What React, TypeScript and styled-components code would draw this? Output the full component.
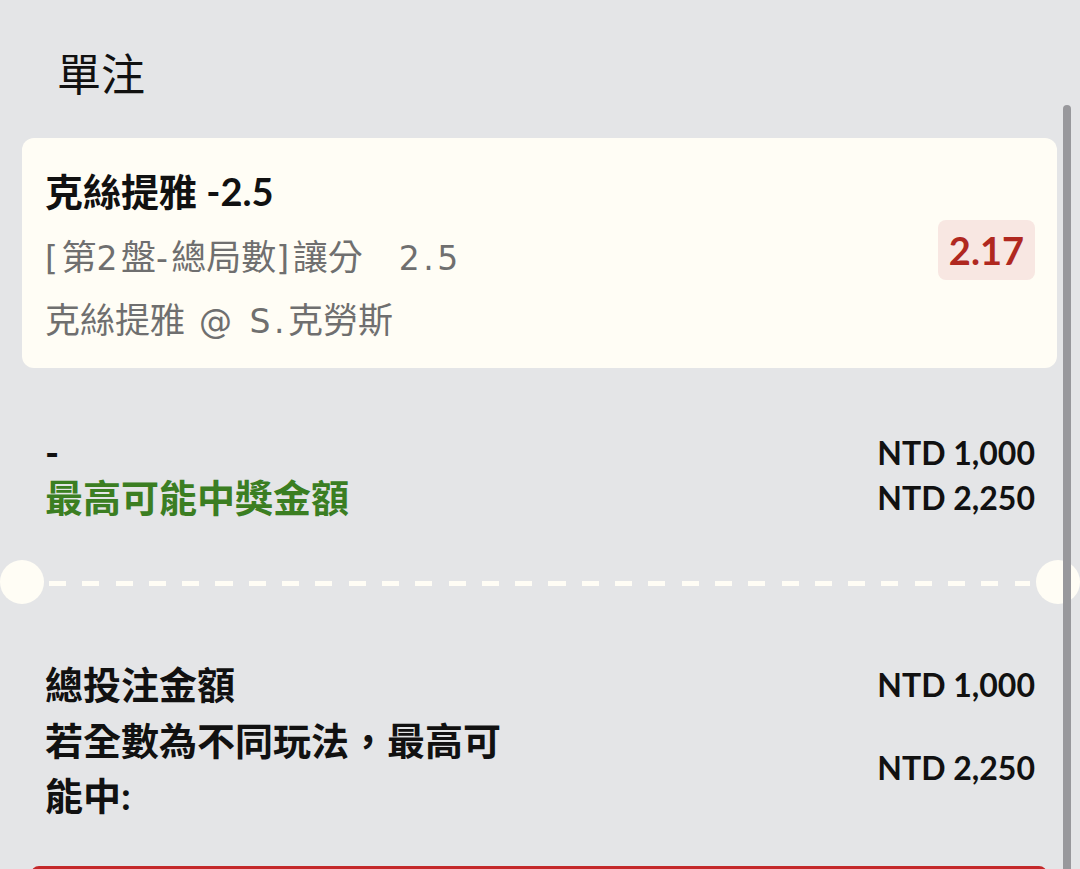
import React from 'react';
import styled, { createGlobalStyle } from 'styled-components';

const GlobalStyle = createGlobalStyle`
  html, body {
    margin: 0;
    padding: 0;
    background: #e4e5e7;
    overflow: hidden;
  }
  body {
    font-family: Lato, "Noto Sans CJK TC", sans-serif;
    color: #111;
  }
`;

const CREAM = '#fffdf5';

const Page = styled.div`
  position: relative;
  width: 1080px;
  height: 869px;
  overflow: hidden;
  background: #e4e5e7;
  display: flex;
  flex-direction: column;
`;

const Header = styled.h1`
  margin: 0 0 41px;
  padding: 47px 0 0 57px;
  height: 51px;
  font-family: "Noto Sans CJK TC", sans-serif;
  font-weight: 400;
  font-size: 44px;
  line-height: 50px;
  color: #111;
`;

const Card = styled.section`
  margin: 0 23px 0 22px;
  height: 230px;
  box-sizing: border-box;
  background: ${CREAM};
  border-radius: 12px;
  padding: 22px 22px 19px 23px;
  display: flex;
  align-items: center;
  justify-content: space-between;
`;

const Info = styled.div`
  display: flex;
  flex-direction: column;
  align-self: flex-start;
`;

const BetTitle = styled.div`
  font-family: Lato, "Noto Sans CJK TC", sans-serif;
  font-weight: 700;
  font-size: 38px;
  height: 63px;
  line-height: 63px;
  color: #111;
`;

const SubLine = styled.div`
  font-family: "Noto Sans CJK TC", sans-serif;
  font-weight: 400;
  font-size: 35px;
  height: 63px;
  line-height: 63px;
  color: #6f6f6f;
  white-space: nowrap;
`;

const Latin = styled.span<{ $lead?: number }>`
  font-family: "DejaVu Sans", sans-serif;
  font-size: 33px;
  line-height: 1;
  letter-spacing: 3.5px;
  margin-left: ${(p) => p.$lead ?? 0}px;
`;

const OddsBadge = styled.div`
  background: #f8e7e2;
  color: #b0281f;
  font-family: Lato, sans-serif;
  font-weight: 700;
  font-size: 38px;
  height: 60px;
  line-height: 60px;
  padding: 0 11px;
  border-radius: 8px;
  margin-bottom: 10px;
`;

const Summary = styled.div<{ $top: number }>`
  margin-top: ${(p) => p.$top}px;
  padding: 0 45px;
  display: flex;
  flex-direction: column;
`;

const Row = styled.div`
  display: flex;
  justify-content: space-between;
  align-items: center;
`;

const Label = styled.div<{ $lh: number; $green?: boolean; $wrap?: boolean }>`
  font-family: Lato, "Noto Sans CJK TC", sans-serif;
  font-weight: 700;
  font-size: 38px;
  line-height: ${(p) => p.$lh}px;
  color: ${(p) => (p.$green ? '#3b7e22' : '#111')};
  max-width: ${(p) => (p.$wrap ? '470px' : 'none')};
`;

const Value = styled.div<{ $lh: number }>`
  font-family: Lato, sans-serif;
  font-weight: 700;
  font-size: 32px;
  line-height: ${(p) => p.$lh}px;
  color: #111;
  white-space: nowrap;
`;

const Divider = styled.div`
  margin-top: 40.5px;
  height: 44px;
  display: flex;
  align-items: center;
`;

const Notch = styled.div`
  flex: none;
  width: 44px;
  height: 44px;
  border-radius: 50%;
  background: ${CREAM};
`;

const Dashes = styled.div`
  flex: 1;
  height: 5px;
  margin: 2px 6px 0 5px;
  background: repeating-linear-gradient(
    to right,
    ${CREAM} 0 17px,
    transparent 17px 33.3px
  );
`;

const SubmitBar = styled.div`
  margin: 42.5px 33px 0 31px;
  height: 60px;
  flex: none;
  background: #c4282a;
  border-radius: 8px;
`;

const Scrollbar = styled.div`
  position: absolute;
  top: 105px;
  right: 9px;
  bottom: 0;
  width: 8px;
  border-radius: 4px 4px 0 0;
  background: #98989c;
`;

export default function App() {
  return (
    <>
      <GlobalStyle />
      <Page>
        <Header>單注</Header>
        <Card>
          <Info>
            <BetTitle>克絲提雅 -2.5</BetTitle>
            <SubLine>
              <Latin>[</Latin>第<Latin>2</Latin>盤<Latin>-</Latin>總局數<Latin>]</Latin>讓分<Latin $lead={22}> 2.5</Latin>
            </SubLine>
            <SubLine>
              克絲提雅<Latin> @ S.</Latin>克勞斯
            </SubLine>
          </Info>
          <OddsBadge>2.17</OddsBadge>
        </Card>

        <Summary $top={61.5}>
          <Row>
            <Label $lh={45}>-</Label>
            <Value $lh={45}>NTD 1,000</Value>
          </Row>
          <Row>
            <Label $lh={45} $green>最高可能中獎金額</Label>
            <Value $lh={45}>NTD 2,250</Value>
          </Row>
        </Summary>

        <Divider>
          <Notch />
          <Dashes />
          <Notch />
        </Divider>

        <Summary $top={53}>
          <Row>
            <Label $lh={55.5}>總投注金額</Label>
            <Value $lh={55.5}>NTD 1,000</Value>
          </Row>
          <Row>
            <Label $lh={55.5} $wrap>若全數為不同玩法，最高可能中:</Label>
            <Value $lh={55.5}>NTD 2,250</Value>
          </Row>
        </Summary>

        <SubmitBar />
        <Scrollbar />
      </Page>
    </>
  );
}
